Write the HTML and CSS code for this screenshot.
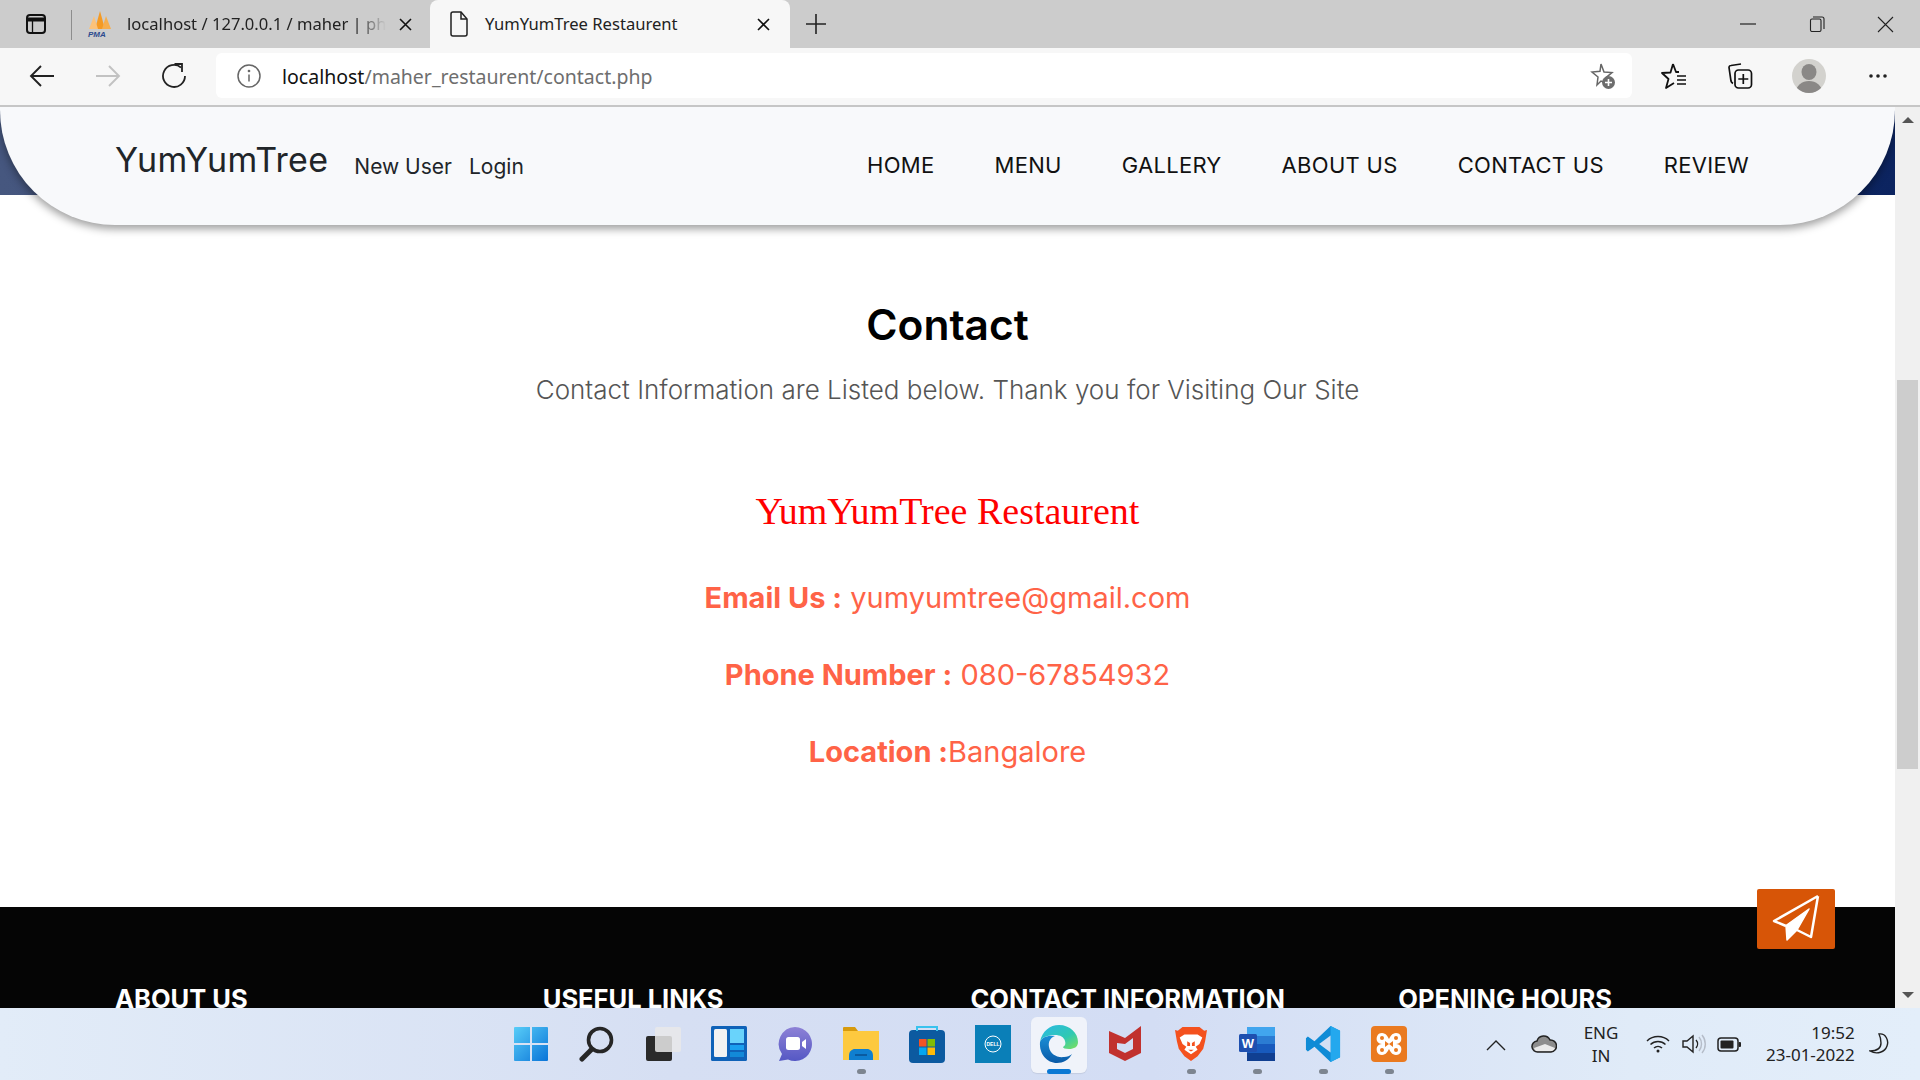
FILE: index.html
```html
<!DOCTYPE html>
<html lang="en">
<head>
<meta charset="utf-8">
<title>YumYumTree Restaurent</title>
<link rel="stylesheet" href="styles.css">
</head>
<body>
<div class="screen">
  <div class="tabstrip">
    <div class="side-btn">
      <svg width="22" height="22" viewBox="0 0 22 22" fill="none" stroke="#111" stroke-width="2"><rect x="2" y="2" width="18" height="18" rx="3"/><path d="M2 6.5h18" stroke-width="4"/><path d="M7.5 7v13" stroke-width="1.3"/></svg>
    </div>
    <div class="tab-sep"></div>
    <div class="tab">
      <svg class="fav" width="26" height="26" viewBox="0 0 26 26"><path d="M13 0l5 18H8z" fill="#f49a24"/><path d="M7 5l4 13H2z" fill="#fbc27a"/><path d="M19 5l5 13h-9z" fill="#f6ae4e"/><text x="1" y="25.500" class="pma">PMA</text></svg>
      <span class="tab-fade">localhost / 127.0.0.1 / maher | phpMyAdmin</span>
      <svg class="x" width="13" height="13" viewBox="0 0 13 13" stroke="#111" stroke-width="1.6"><path d="M1 1l11 11M12 1L1 12"/></svg>
    </div>
    <div class="tab active">
      <svg class="fav" width="20" height="26" viewBox="0 0 20 26" fill="none" stroke="#222" stroke-width="1.5"><path d="M2 3a2 2 0 0 1 2-2h8l6 7v15a2 2 0 0 1-2 2H4a2 2 0 0 1-2-2z"/><path d="M12 1v7h6"/></svg>
      <span class="tab-title">YumYumTree Restaurent</span>
      <svg class="x" width="13" height="13" viewBox="0 0 13 13" stroke="#111" stroke-width="1.6"><path d="M1 1l11 11M12 1L1 12"/></svg>
    </div>
    <div class="new-tab">
      <svg width="22" height="22" viewBox="0 0 22 22" stroke="#222" stroke-width="1.6"><path d="M11 1v20M1 11h20"/></svg>
    </div>
    <div class="win-ctrls">
      <div class="win-btn"><svg width="16" height="16" viewBox="0 0 16 16" stroke="#222" stroke-width="1.2"><path d="M0 8h16"/></svg></div>
      <div class="win-btn"><svg width="16" height="16" viewBox="0 0 16 16" fill="none" stroke="#222" stroke-width="1.1"><rect x="1.5" y="3" width="10.5" height="12.5" rx="1.5"/><path d="M4 1h9a2 2 0 0 1 2 2v10"/></svg></div>
      <div class="win-btn"><svg width="17" height="17" viewBox="0 0 17 17" stroke="#222" stroke-width="1.1"><path d="M1 1l15 15M16 1L1 16"/></svg></div>
    </div>
  </div>

  <div class="toolbar">
    <div class="tool-btn"><svg width="26" height="24" viewBox="0 0 26 24" fill="none" stroke="#222" stroke-width="1.9"><path d="M25 12H2M12 2L2 12l10 10"/></svg></div>
    <div class="tool-btn"><svg width="26" height="24" viewBox="0 0 26 24" fill="none" stroke="#c2c2c2" stroke-width="1.9"><path d="M1 12h23M14 2l10 10-10 10"/></svg></div>
    <div class="tool-btn"><svg width="26" height="26" viewBox="0 0 26 26" fill="none" stroke="#222" stroke-width="1.8"><path d="M20 4.5A11 11 0 1 0 24 13"/><path d="M13.5 1H21v8"/></svg></div>
    <div class="address">
      <svg class="info" width="24" height="24" viewBox="0 0 24 24" fill="none" stroke="#666" stroke-width="1.5"><circle cx="12" cy="12" r="11"/><path d="M12 10.5v7"/><circle cx="12" cy="7" r=".6"/></svg>
      <span class="url"><span class="url-host">localhost</span>/maher_restaurent/contact.php</span>
      <svg class="star-add" width="28" height="28" viewBox="0 0 28 28"><path d="M13 2l3 8 8 .6-6 5 2 6-7-2.600-4 4 1-8-6-5 8-.8z" fill="none" stroke="#666" stroke-width="1.500"/><circle cx="20.500" cy="20.500" r="6.500" fill="#6d6d6d"/><path d="M20.500 17v7M17 20.500h7" stroke="#fff" stroke-width="1.600"/></svg>
    </div>
    <div class="tool-btn first-right"><svg width="28" height="28" viewBox="0 0 28 28" fill="none" stroke="#111" stroke-width="1.800" stroke-linejoin="round"><path d="M13 2l3 8h3M13 2l-2.500 8.500L2 11l6.500 6L6 26l8-5"/><path d="M17 14h9M17 18h9M17 22h9" stroke-width="1.600"/></svg></div>
    <div class="tool-btn"><svg width="28" height="28" viewBox="0 0 28 28" fill="none" stroke="#111" stroke-width="1.700"><path d="M15 2 5 3.500a2 2 0 0 0-2 2L5 19c.3 1.500 1 2 2 2.400"/><rect x="9" y="8" width="16.500" height="18" rx="3.500"/><path d="M17.300 12v10M12.300 17h10"/></svg></div>
    <div class="tool-btn avatar-btn"><svg width="34" height="34" viewBox="0 0 34 34"><defs><clipPath id="av"><circle cx="17" cy="17" r="17"/></clipPath></defs><circle cx="17" cy="17" r="17" fill="#d3d2ce"/><g clip-path="url(#av)" fill="#8a8886"><ellipse cx="17" cy="13" rx="7.500" ry="8"/><ellipse cx="17" cy="33" rx="13" ry="11"/></g></svg></div>
    <div class="tool-btn more-btn"><svg width="20" height="6" viewBox="0 0 20 6" fill="#222"><circle cx="3" cy="3" r="1.800"/><circle cx="10" cy="3" r="1.800"/><circle cx="17" cy="3" r="1.800"/></svg></div>
  </div>

  <div class="viewport">
    <div class="page">
      <div class="hero-band">
        <header class="site-header">
          <div class="brand-wrap">
            <a class="brand">YumYumTree</a>
            <a class="user-link">New User</a>
            <a class="user-link">Login</a>
          </div>
          <nav class="main-nav">
            <a>HOME</a><a>MENU</a><a>GALLERY</a><a>ABOUT US</a><a>CONTACT US</a><a>REVIEW</a>
          </nav>
        </header>
      </div>
      <main class="contact">
        <h2 class="contact-title">Contact</h2>
        <p class="contact-sub">Contact Information are Listed below. Thank you for Visiting Our Site</p>
        <h3 class="rest-name">YumYumTree Restaurent</h3>
        <p class="info-line"><b>Email Us :</b> yumyumtree@gmail.com</p>
        <p class="info-line"><b>Phone Number :</b> 080-67854932</p>
        <p class="info-line"><b>Location :</b>Bangalore</p>
      </main>
      <footer class="site-footer">
        <h4>ABOUT US</h4>
        <h4>USEFUL LINKS</h4>
        <h4>CONTACT INFORMATION</h4>
        <h4>OPENING HOURS</h4>
      </footer>
      <a class="send-btn">
        <svg width="78" height="60" viewBox="0 0 78 60" fill="none" stroke="#fff" stroke-width="2.500" stroke-linejoin="round"><path d="M61 7 17 32l12 5M61 7l-7 41-14-7"/><path d="M52 20 29 36.500 30 51l10-10z" fill="#fff" stroke-width="1.500"/></svg>
      </a>
    </div>
    <div class="scrollbar">
      <div class="arrow up"></div>
      <div class="thumb"></div>
      <div class="arrow down"></div>
    </div>
  </div>

  <div class="taskbar">
    <div></div>
    <div class="task-icons">
      <div class="task-item"><svg width="36" height="36" viewBox="0 0 36 36"><defs><linearGradient id="wn" x1="0" y1="0" x2="1" y2="1"><stop offset="0" stop-color="#58cdf8"/><stop offset="1" stop-color="#0a74d8"/></linearGradient></defs><path d="M2 1h15v16H1V2a1 1 0 0 1 1-1zM19 1h15a1 1 0 0 1 1 1v15H19zM1 19h16v16H2a1 1 0 0 1-1-1zM19 19h16v15a1 1 0 0 1-1 1H19z" fill="url(#wn)"/></svg></div>
      <div class="task-item"><svg width="36" height="36" viewBox="0 0 36 36" fill="none" stroke="#262626"><circle cx="21" cy="14" r="11.500" stroke-width="3.600"/><path d="M12 24 3 33" stroke-width="5" stroke-linecap="round"/></svg></div>
      <div class="task-item"><svg width="36" height="36" viewBox="0 0 36 36"><rect x="1" y="10" width="26" height="25" rx="2" fill="#2a2a2a"/><rect x="10" y="1" width="26" height="25" rx="2" fill="#e9e9e9" fill-opacity=".85"/></svg></div>
      <div class="task-item"><svg width="36" height="36" viewBox="0 0 36 36"><rect width="36" height="35" rx="1.500" fill="#0f62b8"/><rect x="3" y="3" width="13" height="28" rx="1.500" fill="#f2f2f2"/><rect x="19" y="3" width="14" height="14" fill="#69d3fb"/><rect x="19" y="19" width="14" height="5" fill="#1aa0ef"/><rect x="19" y="26" width="14" height="5" fill="#1289d8"/></svg></div>
      <div class="task-item"><svg width="36" height="36" viewBox="0 0 36 36"><defs><linearGradient id="tm" x1="0" y1="0" x2="0" y2="1"><stop offset="0" stop-color="#8d81d6"/><stop offset="1" stop-color="#5558c4"/></linearGradient></defs><path d="M18 1a17 17 0 1 1-7 32.500L2 35l3-7A17 17 0 0 1 18 1z" fill="url(#tm)"/><rect x="9" y="11" width="14" height="13" rx="2.500" fill="#fff"/><path d="M25 16l4-3v10l-4-3z" fill="#fff"/></svg></div>
      <div class="task-item has-dot"><svg width="36" height="36" viewBox="0 0 36 36"><path d="M0 2a1 1 0 0 1 1-1h11l3 4H0z" fill="#d79a0c"/><path d="M0 5h36v29H0z" fill="#fdc93f"/><path d="M6 34v-4c0-5 3-7 6-7h12c3 0 6 2 6 7v4z" fill="#0f7fd0"/><path d="M12 29h12" stroke="#0a5ba0" stroke-width="2"/></svg></div>
      <div class="task-item"><svg width="36" height="38" viewBox="0 0 36 38"><rect y="5" width="36" height="33" rx="4" fill="#0c5aa0"/><path d="M8 6V2h20v4" fill="none" stroke="#39c2ee" stroke-width="2"/><rect x="10" y="14" width="7.500" height="7.500" fill="#f35325"/><rect x="18.500" y="14" width="7.500" height="7.500" fill="#81bc06"/><rect x="10" y="22.500" width="7.500" height="7.500" fill="#05a6f0"/><rect x="18.500" y="22.500" width="7.500" height="7.500" fill="#ffba08"/></svg></div>
      <div class="task-item"><svg width="36" height="38" viewBox="0 0 36 38"><rect width="36" height="38" fill="#0a7fb8"/><circle cx="18" cy="19" r="8" fill="none" stroke="#fff" stroke-width="1"/><text x="18" y="21" class="dell">DELL</text></svg></div>
      <div class="task-item current"><svg width="40" height="40" viewBox="0 0 40 40"><defs><linearGradient id="e1" x1="0" y1="0" x2="1" y2="1"><stop offset="0" stop-color="#2bb8e6"/><stop offset=".6" stop-color="#2fc9b2"/><stop offset="1" stop-color="#7fe05a"/></linearGradient><linearGradient id="e2" x1="0" y1="0" x2="0" y2="1"><stop offset="0" stop-color="#1a8fd6"/><stop offset="1" stop-color="#0a5aa8"/></linearGradient></defs><path d="M1 18C3 7 11 1 20 1c11 0 19 8 19 17 0 5-4 7-9 7-4 0-6-1-6-2 2-1 3-3 2-6-1-4-5-6-10-6C9 11 3 13 1 18z" fill="url(#e1)"/><path d="M1 18c2-5 8-7 15-6-5 2-7 6-6 11 1 7 8 11 15 10 3 0 6-1 8-3-3 6-9 9-15 9C8 39 0 30 1 18z" fill="url(#e2)"/></svg></div>
      <div class="task-item"><svg width="32" height="36" viewBox="0 0 32 36"><path d="M0 5 16 12 32 0V27L16 35 0 27ZM8 17V23L16 27 24 23V12L16 18Z" fill="#c1312e" fill-rule="evenodd"/></svg></div>
      <div class="task-item has-dot"><svg width="32" height="36" viewBox="0 0 34 38"><path d="M8 1h18l5 4 3-1-2 12-2 8-6 8-7 5-7-5-6-8-2-8L0 4l3 1z" fill="#f4511e"/><path d="M10 9h14l5 3-3 7-4 3 2 3-7 5-7-5 2-3-4-3-3-7z" fill="#fff"/><path d="M13 16l3 2v3h-3zM21 16l-3 2v3h3zM14 25h6l-3 2z" fill="#f4511e"/></svg></div>
      <div class="task-item has-dot"><svg width="36" height="36" viewBox="0 0 36 36"><path d="M8 3a2 2 0 0 1 2-2h24a2 2 0 0 1 2 2v30a2 2 0 0 1-2 2H10a2 2 0 0 1-2-2z" fill="#2b7cd3"/><path d="M8 1h28v9H8z" fill="#41a5ee"/><path d="M8 18h28v9H8z" fill="#185abd"/><path d="M8 27h28v8H8z" fill="#103f91"/><rect y="8" width="18" height="18" rx="1.500" fill="#1e4faf"/><text x="9" y="22" class="wd">W</text></svg></div>
      <div class="task-item has-dot"><svg width="36" height="36" viewBox="0 0 36 38"><path d="M26 0l10 5v28l-10 5-17-16-7 5-2-2v-12l2-2 7 5z" fill="#0f8bd6"/><path d="M26 0l10 5v28l-10 5z" fill="#24a8ee"/><path d="M26 10v18L14 19z" fill="#d3dff4"/></svg></div>
      <div class="task-item has-dot"><svg width="36" height="36" viewBox="0 0 36 36"><rect width="36" height="36" rx="4" fill="#ea7a20"/><path d="M11 7c4 0 6 4 7 6 1-2 3-6 7-6 5 0 6 5 5 8-1 2-3 3-5 3 2 0 4 1 5 3 1 3 0 8-5 8-4 0-6-4-7-6-1 2-3 6-7 6-5 0-6-5-5-8 1-2 3-3 5-3-2 0-4-1-5-3-1-3 0-8 5-8z" fill="#fff"/><path d="M14 15l4 3-4 3zM22 15l-4 3 4 3z" fill="#ea7a20"/><circle cx="11" cy="12" r="2" fill="#ea7a20"/><circle cx="25" cy="12" r="2" fill="#ea7a20"/><circle cx="11" cy="24" r="2" fill="#ea7a20"/><circle cx="25" cy="24" r="2" fill="#ea7a20"/></svg></div>
    </div>
    <div class="tray">
      <svg class="t-chev" width="20" height="11" viewBox="0 0 20 11" fill="none" stroke="#222" stroke-width="1.400"><path d="M1 10l9-9 9 9"/></svg>
      <svg class="t-cloud" width="26" height="18" viewBox="0 0 26 18"><path d="M7 17a5.500 5.500 0 0 1-1-11 7 7 0 0 1 13-1 6 6 0 0 1 1 12z" fill="#8d8d8d"/><path d="M3 13l11-4 10 4c0 2-2 3.500-4 3.500H7c-2 0-3.500-1-4-3.500z" fill="#eaeaea"/><path d="M7 17a5.500 5.500 0 0 1-1-11 7 7 0 0 1 13-1 6 6 0 0 1 1 12z" fill="none" stroke="#222" stroke-width="1.500"/></svg>
      <div class="t-lang"><span>ENG</span><span>IN</span></div>
      <svg class="t-wifi" width="24" height="18" viewBox="0 0 24 18" fill="none" stroke="#222" stroke-width="1.500"><path d="M1 6a16 16 0 0 1 22 0M4.500 9.500a11 11 0 0 1 15 0M8 13a6 6 0 0 1 8 0"/><circle cx="12" cy="16" r="1.500" fill="#222" stroke="none"/></svg>
      <svg class="t-vol" width="24" height="20" viewBox="0 0 24 20" fill="none" stroke="#222" stroke-width="1.400"><path d="M1 7v6h4l6 5V2L5 7z"/><path d="M14 6a6 6 0 0 1 0 8"/><path d="M17 3a11 11 0 0 1 0 14M20 1a14 14 0 0 1 0 18" stroke="#b5bcc8"/></svg>
      <svg class="t-batt" width="24" height="15" viewBox="0 0 24 15"><rect x="1" y="1" width="20" height="13" rx="3" fill="none" stroke="#222" stroke-width="1.500"/><rect x="3.500" y="3.500" width="13" height="8" rx="1" fill="#222"/><rect x="21.500" y="5" width="2.500" height="5" rx="1" fill="#222"/></svg>
      <div class="t-clock"><span>19:52</span><span>23-01-2022</span></div>
      <svg class="t-moon" width="20" height="22" viewBox="0 0 20 22" fill="none" stroke="#222" stroke-width="1.400"><path d="M10 1c7-1 10 7 8 12-2 6-10 9-17 5 6 0 11-2 11-8 0-4-1-7-2-9z"/></svg>
    </div>
  </div>
</div>
</body>
</html>
```
FILE: styles.css
```css
* { box-sizing: border-box; }
html, body { margin: 0; height: 100%; overflow: hidden; }
body { font-family: "Noto Sans", sans-serif; }
a { color: inherit; text-decoration: none; }
h2, h3, h4, p { margin: 0; }

.screen { display: flex; flex-direction: column; width: 1920px; height: 1080px; }

/* Browser tab strip */
.tabstrip { display: flex; align-items: stretch; height: 48px; background: #cccccc; color: #222; flex: none; }
.side-btn { width: 71px; display: flex; align-items: center; justify-content: center; }
.tab-sep { width: 1px; height: 30px; margin-top: 10px; background: #8d8d8d; }
.tab { width: 358px; display: flex; align-items: center; padding: 0 0 0 15px; position: relative; font-size: 16.600px; }
.tab .fav { flex: none; }
.tab-fade { margin: 0 0 2px 14px; width: 259px; white-space: nowrap; overflow: hidden; -webkit-mask-image: linear-gradient(90deg, #000 88%, transparent); mask-image: linear-gradient(90deg, #000 88%, transparent); }
.tab .x { flex: none; margin-left: 13px; }
.tab.active { width: 360px; background: #f7f7f7; border-radius: 8px 8px 0 0; padding-left: 19px; }
.tab-title { margin: 0 0 2px 16px; width: 259px; white-space: nowrap; }
.new-tab { width: 52px; display: flex; align-items: center; justify-content: center; }
.win-ctrls { margin-left: auto; display: flex; }
.win-btn { width: 69px; display: flex; align-items: center; justify-content: center; }

/* Browser toolbar */
.toolbar { display: flex; align-items: center; height: 59px; flex: none; padding: 0 9px 2px; background: #f7f7f7; border-bottom: 2px solid #c6c6c6; }
.tool-btn { width: 66px; height: 45px; display: flex; align-items: center; justify-content: center; flex: none; }
.address { margin-left: 9px; width: 1416px; height: 45px; background: #fff; border-radius: 6px; display: flex; align-items: center; padding: 0 16px 0 21px; }
.info { flex: none; }
.url { margin-left: 21px; padding-top: 2px; font-size: 19.500px; color: #6e6e6e; white-space: nowrap; }
.url-host { color: #111; }
.star-add { margin-left: auto; }
.first-right { margin-left: 9px; }
.avatar-btn { margin-left: 3px; }
.more-btn { margin-left: 3px; }

/* Page area */
.viewport { flex: 1; display: flex; min-height: 0; }
.page { flex: 1; display: flex; flex-direction: column; position: relative; background: #fff; overflow: hidden; min-width: 0; }
.hero-band { flex: none; background: linear-gradient(90deg, #46577f, #0c2460) no-repeat; background-size: 100% 88px; }
.site-header { height: 118px; display: flex; align-items: center; justify-content: space-between; padding: 0 146px 10px 115px; background: #f8f9fb; border-radius: 0 0 115px 115px; box-shadow: 0 4px 8px rgba(0, 0, 0, .38); }
.brand-wrap { display: flex; align-items: baseline; color: #212529; font-family: "Inter", sans-serif; }
.brand { font-size: 34px; margin-right: 26px; letter-spacing: .3px; transform: translateY(-2px); }
.user-link { font-size: 21px; margin-right: 17px; }
.main-nav { display: flex; gap: 60px; font-family: "Inter", sans-serif; font-size: 22px; letter-spacing: .3px; color: #111; padding-top: 8px; }

.contact { flex: none; height: 682px; display: flex; flex-direction: column; align-items: center; padding-top: 76px; font-family: "Inter", sans-serif; }
.contact-title { font-size: 42.500px; font-weight: 600; line-height: 48px; color: #000; }
.contact-sub { font-size: 26px; font-weight: 300; line-height: 40px; color: #555; margin-top: 21px; }
.rest-name { font-family: "Liberation Serif", serif; font-weight: 400; font-size: 38px; line-height: 44px; color: #ff0000; margin-top: 79px; }
.info-line { font-size: 29px; line-height: 40px; color: #ff6347; }
.rest-name + .info-line { margin-top: 45px; }
.info-line + .info-line { margin-top: 37px; }
.info-line b { font-weight: 700; }

.site-footer { flex: 1; min-height: 0; display: grid; grid-template-columns: repeat(4, 1fr); padding: 76px 69px 0 115px; background: #050505; overflow: hidden; font-family: "Inter", sans-serif; }
.site-footer h4 { font-size: 25.500px; font-weight: 700; line-height: 32px; color: #fff; white-space: nowrap; }

.send-btn { position: absolute; left: 1757px; top: 782px; width: 78px; height: 60px; display: flex; background: #d75507; border-radius: 2px; }

/* Scrollbar */
.scrollbar { width: 25px; flex: none; background: #f0f0f0; display: flex; flex-direction: column; align-items: center; padding: 0 2px; }
.arrow { width: 0; height: 0; border-left: 6px solid transparent; border-right: 6px solid transparent; flex: none; }
.arrow.up { margin-top: 10px; border-bottom: 6px solid #555; }
.arrow.down { margin-bottom: 10px; border-top: 6px solid #555; }
.thumb { width: 100%; height: 389px; margin-top: 257px; margin-bottom: auto; background: #cdcdcd; }

/* Windows taskbar */
.taskbar { flex: none; height: 72px; display: grid; grid-template-columns: 1fr auto 1fr; background: linear-gradient(90deg, #e2ecf8 0%, #d6dff3 35%, #d3ddf4 60%, #e0ebf8 85%, #e3eefa 100%); color: #222; }
.task-icons { display: flex; align-items: center; }
.task-item { width: 66px; height: 72px; display: flex; align-items: center; justify-content: center; position: relative; }
.task-item svg { position: relative; }
.has-dot::after { content: ""; position: absolute; bottom: 6px; left: 29px; width: 9px; height: 5px; background: #7d8590; border-radius: 3px; }
.current::before { content: ""; position: absolute; left: 5px; top: 9px; width: 56px; height: 56px; background: #f0f3fa; border-radius: 6px; box-shadow: 0 1px 1px rgba(0, 0, 0, .08); }
.current::after { content: ""; position: absolute; bottom: 6px; left: 21px; width: 24px; height: 5px; background: #0a78d4; border-radius: 3px; }
.tray { display: flex; align-items: center; position: relative; padding-left: 64px; }
.t-chev { margin-top: 2px; }
.t-cloud { margin-left: 25px; }
.t-lang { margin-left: 22px; width: 44px; display: flex; flex-direction: column; align-items: center; font-size: 17px; line-height: 23px; }
.t-wifi { margin-left: 23px; }
.t-vol { margin-left: 12px; }
.t-batt { margin-left: 11px; }
.t-clock { margin-left: 25px; display: flex; flex-direction: column; align-items: flex-end; font-size: 17px; line-height: 22px; }
.t-moon { margin-left: 14px; }
.pma { font: italic 700 8px "Liberation Sans", sans-serif; fill: #2b4a8e; }
.dell { font: 700 5px "Liberation Sans", sans-serif; fill: #fff; text-anchor: middle; }
.wd { font: 700 13px "Liberation Sans", sans-serif; fill: #fff; text-anchor: middle; }
```
